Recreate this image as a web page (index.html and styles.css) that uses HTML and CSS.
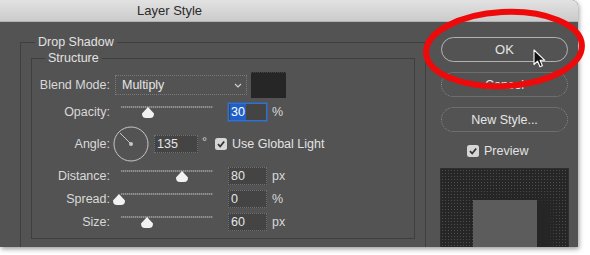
FILE: index.html
```html
<!DOCTYPE html>
<html lang="en">
<head>
    <meta charset="UTF-8">
    <title>Layer Style</title>
    <link rel="stylesheet" href="styles.css">
</head>
<body>
    <div class="page">
        <div class="window">
            <div class="titlebar">Layer Style</div>
            <div class="content">
                <div class="main">
                    <fieldset class="group drop">
                        <legend>Drop Shadow</legend>
                        <fieldset class="group structure">
                            <legend>Structure</legend>

                            <div class="row blend-row">
                                <label>Blend Mode:</label>
                                <div class="select">
                                    <span>Multiply</span>
                                    <svg class="chevron" width="8" height="5" viewBox="0 0 8 5"><path d="M1 1 L4 4 L7 1" fill="none" stroke="#d0d0d0" stroke-width="1.2"/></svg>
                                </div>
                                <div class="swatch"></div>
                            </div>

                            <div class="row">
                                <label>Opacity:</label>
                                <div class="slider">
                                    <div class="track"></div>
                                    <svg class="thumb" style="left: 21px" width="12" height="11" viewBox="0 0 12 11"><path d="M6 0 L12 6.5 Q12 11 8 11 L4 11 Q0 11 0 6.5 Z" fill="#f2f2f2"/></svg>
                                </div>
                                <div class="field active"><span class="sel">30</span></div>
                                <span class="unit">%</span>
                            </div>

                            <div class="row angle-row">
                                <label>Angle:</label>
                                <svg class="dial" width="36" height="36" viewBox="0 0 36 36">
                                    <circle cx="18" cy="18" r="17" fill="none" stroke="#c6c6c6" stroke-width="1"/>
                                    <line x1="7" y1="7" x2="18" y2="18" stroke="#c6c6c6" stroke-width="1"/>
                                    <circle cx="18" cy="18" r="2" fill="#c6c6c6"/>
                                </svg>
                                <div class="field angle">135</div>
                                <span class="deg">°</span>
                                <span class="check"><svg width="12" height="12" viewBox="0 0 12 12"><path d="M3 6.2 L5.2 8.5 L9.2 3.5" fill="none" stroke="#333" stroke-width="1.8"/></svg></span>
                                <span class="check-text">Use Global Light</span>
                            </div>

                            <div class="row">
                                <label>Distance:</label>
                                <div class="slider">
                                    <div class="track"></div>
                                    <svg class="thumb" style="left: 55px" width="12" height="11" viewBox="0 0 12 11"><path d="M6 0 L12 6.5 Q12 11 8 11 L4 11 Q0 11 0 6.5 Z" fill="#f2f2f2"/></svg>
                                </div>
                                <div class="field">80</div>
                                <span class="unit">px</span>
                            </div>

                            <div class="row">
                                <label>Spread:</label>
                                <div class="slider">
                                    <div class="track"></div>
                                    <svg class="thumb" style="left: -8px" width="12" height="11" viewBox="0 0 12 11"><path d="M6 0 L12 6.5 Q12 11 8 11 L4 11 Q0 11 0 6.5 Z" fill="#f2f2f2"/></svg>
                                </div>
                                <div class="field">0</div>
                                <span class="unit">%</span>
                            </div>

                            <div class="row">
                                <label>Size:</label>
                                <div class="slider">
                                    <div class="track"></div>
                                    <svg class="thumb" style="left: 20px" width="12" height="11" viewBox="0 0 12 11"><path d="M6 0 L12 6.5 Q12 11 8 11 L4 11 Q0 11 0 6.5 Z" fill="#f2f2f2"/></svg>
                                </div>
                                <div class="field">60</div>
                                <span class="unit">px</span>
                            </div>
                        </fieldset>
                    </fieldset>
                </div>

                <div class="side">
                    <button class="btn default">OK</button>
                    <button class="btn">Cancel</button>
                    <button class="btn">New Style...</button>
                    <div class="preview-check">
                        <span class="check"><svg width="12" height="12" viewBox="0 0 12 12"><path d="M3 6.2 L5.2 8.5 L9.2 3.5" fill="none" stroke="#333" stroke-width="1.8"/></svg></span>
                        <span class="check-text">Preview</span>
                    </div>
                    <div class="preview">
                        <div class="preview-square"></div>
                    </div>
                </div>
            </div>
        </div>

        <!-- highlight drawn over the screenshot -->
        <svg class="highlight" width="590" height="255" viewBox="0 0 590 255">
            <ellipse cx="504" cy="49" rx="78" ry="37" fill="none" stroke="#ee0a0a" stroke-width="6" transform="rotate(-3 504 49)"/>
        </svg>
        <svg class="cursor" width="14" height="20" viewBox="0 0 14 20">
            <path d="M1 1 L1 15.5 L4.6 12.2 L7 17.8 L9.4 16.8 L7.1 11.3 L11.8 11.3 Z" fill="#111" stroke="#fff" stroke-width="1.1" stroke-linejoin="round"/>
        </svg>
    </div>
</body>
</html>
```

FILE: styles.css
```css
body {
    margin: 0;
    background-color: #ffffff;
    font-family: "Liberation Sans", Arial, sans-serif;
    font-size: 12.5px;
    color: #d9d9d9;
}

.page {
    position: relative;
    width: 590px;
    height: 255px;
}

.window {
    width: 578px;
    height: 247px;
    background-color: #535353;
    border-top-right-radius: 6px;
    box-shadow: 1px 2px 5px rgba(0, 0, 0, 0.4);
    overflow: hidden;
    display: flex;
    flex-direction: column;
}

.titlebar {
    height: 22px;
    line-height: 22px;
    padding-left: 137px;
    font-size: 13px;
    color: #2b2b2b;
    background: linear-gradient(#e2e2e2, #cbcbcb);
    border-bottom: 1px solid #b2b2b2;
    box-sizing: border-box;
    flex: none;
}

.content {
    display: flex;
    flex: 1;
}

.main {
    width: 426px;
    flex: none;
}

.group {
    margin: 0;
    border: 1px solid #3f3f3f;
    min-inline-size: 0;
}

.group legend {
    line-height: 16px;
    padding: 0 3px;
    color: #e2e2e2;
}

.drop {
    margin: 12px 0 0 20px;
    width: 406px;
    box-sizing: border-box;
    padding: 0 10px;
    border-bottom: none;
    height: 240px;
}

.drop legend {
    margin-left: 4px;
}

.structure {
    padding: 6px 0 7px 0;
    display: flex;
    flex-direction: column;
    gap: 5px;
}

.structure legend {
    margin-left: 13px;
}

.row {
    display: flex;
    align-items: center;
    height: 18px;
}

.row label {
    width: 78px;
    text-align: right;
    flex: none;
}

.blend-row {
    height: 26px;
}

.select {
    margin-left: 5px;
    width: 132px;
    height: 20px;
    box-sizing: border-box;
    border: 1px dotted #7a7a7a;
    display: flex;
    align-items: center;
    justify-content: space-between;
    padding: 0 4px 0 6px;
    color: #e6e6e6;
}

.swatch {
    margin-left: 4px;
    width: 35px;
    height: 26px;
    background-color: #262626;
    border-top: 1px dotted #444;
    box-sizing: border-box;
}

.slider {
    position: relative;
    margin-left: 11px;
    width: 92px;
    height: 18px;
    flex: none;
}

.track {
    position: absolute;
    left: 0;
    right: 0;
    top: 3px;
    height: 2px;
    background: repeating-linear-gradient(90deg, #8e8e8e 0 1px, #6c6c6c 1px 2px);
}

.thumb {
    position: absolute;
    top: 4px;
}

.field {
    margin-left: 15px;
    width: 39px;
    height: 18px;
    box-sizing: border-box;
    border: 1px dotted #707070;
    background-color: #444444;
    padding-left: 2px;
    line-height: 16px;
    color: #e4e4e4;
    flex: none;
}

.field.active {
    border: 1px solid #2f72d6;
    box-shadow: 0 0 0 1px rgba(47, 114, 214, 0.45);
    padding-left: 1px;
}

.sel {
    display: inline-block;
    height: 16px;
    padding: 0 1px;
    background-color: #1f5fc7;
    color: #ffffff;
}

.unit {
    margin-left: 5px;
}

.angle-row {
    height: 36px;
}

.dial {
    margin-left: 3px;
    flex: none;
}

.field.angle {
    margin-left: 5px;
    width: 44px;
}

.deg {
    margin-left: 4px;
    align-self: flex-start;
    margin-top: 9px;
}

.check {
    width: 12px;
    height: 12px;
    border-radius: 2.5px;
    background-color: #d6d6d6;
    display: inline-flex;
    flex: none;
}

.angle-row .check {
    margin-left: 8px;
}

.check-text {
    margin-left: 5px;
    color: #e2e2e2;
}

.side {
    padding: 15px 0 0 15px;
    display: flex;
    flex-direction: column;
    gap: 10px;
    width: 127px;
}

.btn {
    height: 25px;
    width: 127px;
    border-radius: 13px;
    border: 1px dotted #8a8a8a;
    background: transparent;
    color: #e6e6e6;
    font-family: inherit;
    font-size: 12.5px;
    padding: 0;
}

.btn.default {
    border: 1px solid #b3b3b3;
    font-size: 13px;
}

.preview-check {
    display: flex;
    align-items: center;
    padding-left: 26px;
    margin-top: 2px;
    height: 14px;
}

.preview {
    margin: 0 0 0 -1px;
    width: 129px;
    height: 90px;
    box-sizing: border-box;
    border: 1px solid #2e2e2e;
    background: radial-gradient(circle, #4d4d4d 0.7px, transparent 0.9px) 0 0 / 3px 3px, #262626;
    padding: 31px 0 0 32px;
}

.preview-square {
    width: 64px;
    height: 60px;
    background-color: #5c5c5c;
    box-shadow: 10px 4px 8px 5px #262626;
}

.highlight {
    position: absolute;
    left: 0;
    top: 0;
    pointer-events: none;
}

.cursor {
    position: absolute;
    left: 533px;
    top: 49px;
}
```
